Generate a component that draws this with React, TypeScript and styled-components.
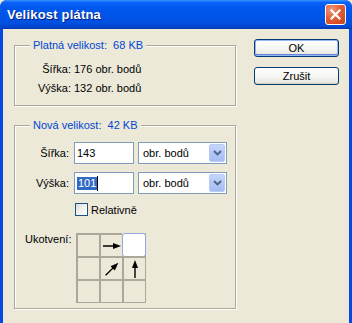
import React from "react";
import styled, { createGlobalStyle } from "styled-components";

const Global = createGlobalStyle`
  html, body { margin: 0; padding: 0; background: #ece9d8; overflow: hidden; }
  * { box-sizing: border-box; }
`;

const Window = styled.div`
  width: 352px;
  height: 323px;
  display: flex;
  flex-direction: column;
  font-family: "Liberation Sans", Arial, sans-serif;
  font-size: 11px;
  color: #000;
  background: #0a46e0;
  border-radius: 7px 7px 0 0;
  overflow: hidden;
`;

const TitleBar = styled.div`
  height: 29px;
  flex: none;
  display: flex;
  align-items: center;
  justify-content: space-between;
  padding: 0 6px 1px 7px;
  background: linear-gradient(
    180deg,
    #3d93ff 0%,
    #0a64f8 8%,
    #0058ee 25%,
    #0054e8 55%,
    #0050e0 80%,
    #0044cc 94%,
    #003aae 100%
  );
`;

const Title = styled.span`
  font-family: "Liberation Sans", Arial, sans-serif;
  font-weight: bold;
  font-size: 13px;
  color: #fff;
  text-shadow: 1px 1px 0 #0a1e80;
  letter-spacing: 0.2px;
`;

const CloseButton = styled.div`
  width: 21px;
  height: 21px;
  border: 1px solid #fff;
  border-radius: 3px;
  background: radial-gradient(circle at 30% 25%, #f09a7e 0%, #e35d35 45%, #c8401b 100%);
  display: flex;
  align-items: center;
  justify-content: center;
  margin-top: 1px;
`;

const Body = styled.div`
  flex: 1;
  margin: 0 3px;
  background: #ece9d8;
  display: flex;
  align-items: flex-start;
  padding: 10px 0 0 11px;
`;

const LeftCol = styled.div`
  width: 223px;
  display: flex;
  flex-direction: column;
  gap: 13px;
`;

const Group = styled.fieldset<{ $h: number }>`
  margin: 0;
  padding: 0;
  min-width: 0;
  width: 222px;
  height: ${(p) => p.$h}px;
  border: 1px solid #aca899;
  box-shadow: inset 1px 1px 0 #fff, 1px 1px 0 #fff;
  position: relative;
`;

const Legend = styled.legend`
  margin-left: 15px;
  padding: 0 3px;
  color: #0046d5;
  white-space: pre;
  background: #ece9d8;
  line-height: 13px;
`;

const InfoGrid = styled.div`
  display: grid;
  grid-template-columns: 41px auto;
  column-gap: 3px;
  row-gap: 6px;
  padding: 11px 0 0 15px;
  line-height: 13px;
`;

const RightLabel = styled.span`
  text-align: right;
`;

const FormGrid = styled.div`
  display: grid;
  grid-template-columns: 55px 60px 89px;
  column-gap: 4px;
  row-gap: 8px;
  padding: 10px 0 0 0;
  align-items: center;
`;

const FieldLabel = styled.span`
  text-align: right;
  padding-right: 1px;
`;

const TextInput = styled.div`
  height: 22px;
  border: 1px solid #7f9db9;
  background: #fff;
  display: flex;
  align-items: center;
  padding-left: 2px;
`;

const Selected = styled.span`
  background: #316ac5;
  color: #fff;
  padding: 0 1px;
  line-height: 13px;
`;

const Caret = styled.span`
  width: 1px;
  height: 15px;
  background: #000;
`;

const Select = styled.div`
  height: 22px;
  border: 1px solid #7f9db9;
  background: #fff;
  display: flex;
  align-items: center;
  justify-content: space-between;
  padding: 0 1px 0 4px;
`;

const DropButton = styled.div`
  width: 16px;
  height: 18px;
  border-radius: 2px;
  background: linear-gradient(180deg, #c6d6fc 0%, #b4c8f6 50%, #a6bcf2 100%);
  border: 1px solid #b9cbf5;
  display: flex;
  align-items: center;
  justify-content: center;
`;

const CheckRow = styled.div`
  grid-column: 2 / 4;
  display: flex;
  align-items: center;
  gap: 3px;
  margin-top: 1px;
  padding-left: 1px;
`;

const CheckBox = styled.span`
  width: 13px;
  height: 13px;
  border: 1px solid #1c5180;
  background: linear-gradient(135deg, #dcdcd7 0%, #f5f5f2 60%, #fff 100%);
`;

const AnchorRow = styled.div`
  display: flex;
  align-items: flex-start;
  padding: 17px 0 0 10px;
`;

const AnchorLabel = styled.span`
  width: 51px;
  line-height: 13px;
`;

const AnchorGrid = styled.div`
  display: grid;
  grid-template-columns: repeat(3, 23px);
  grid-template-rows: repeat(3, 23px);
  border-right: 1px solid #aca899;
  border-bottom: 1px solid #aca899;
  width: 70px;
`;

const Cell = styled.div<{ $active?: boolean }>`
  border-left: 2px solid #aca899;
  border-top: 2px solid #aca899;
  display: flex;
  align-items: center;
  justify-content: center;
  position: relative;
  ${(p) =>
    p.$active &&
    `
    background: #fff;
    border: 1px solid #8faad8;
    border-radius: 3px;
    margin: 0 -1px -1px 0;
  `}
`;

const RightCol = styled.div`
  display: flex;
  flex-direction: column;
  gap: 10px;
  margin: 0 0 0 17px;
`;

const Button = styled.div<{ $default?: boolean }>`
  width: 85px;
  height: 18px;
  border: 1px solid #003c74;
  border-radius: 3px;
  background: linear-gradient(180deg, #ffffff 0%, #f4f4f0 60%, #e3e2da 100%);
  display: flex;
  align-items: center;
  justify-content: center;
  box-shadow: ${(p) =>
    p.$default ? "inset 0 0 0 1px #9ab8f0, inset 0 -1px 0 1px #5f87d9" : "inset 0 -1px 0 #d6d0c5"};
`;

const Arrow = ({ rot }: { rot: number }) => (
  <svg width="20" height="20" viewBox="0 0 20 20" style={{ transform: `rotate(${rot}deg)` }}>
    <line x1="1" y1="10" x2="13" y2="10" stroke="#000" strokeWidth="1.4" />
    <polygon points="11,7 19,10 11,13" fill="#000" />
  </svg>
);

const Chevron = () => (
  <svg width="9" height="6" viewBox="0 0 9 6">
    <path d="M1 1 L4.5 4.5 L8 1" fill="none" stroke="#4d6185" strokeWidth="1.8" />
  </svg>
);

export default function App() {
  return (
    <>
      <Global />
      <Window>
        <TitleBar>
          <Title>Velikost plátna</Title>
          <CloseButton>
            <svg width="11" height="11" viewBox="0 0 11 11">
              <path d="M1.5 1.5 L9.5 9.5 M9.5 1.5 L1.5 9.5" stroke="#fff" strokeWidth="2.2" strokeLinecap="square" />
            </svg>
          </CloseButton>
        </TitleBar>
        <Body>
          <LeftCol>
            <Group $h={67}>
              <Legend>{"Platná velikost:  68 KB"}</Legend>
              <InfoGrid>
                <RightLabel>Šířka:</RightLabel>
                <span>176 obr. bodů</span>
                <RightLabel>Výška:</RightLabel>
                <span>132 obr. bodů</span>
              </InfoGrid>
            </Group>
            <Group $h={190}>
              <Legend>{"Nová velikost:  42 KB"}</Legend>
              <FormGrid>
                <FieldLabel>Šířka:</FieldLabel>
                <TextInput>143</TextInput>
                <Select>
                  <span>obr. bodů</span>
                  <DropButton>
                    <Chevron />
                  </DropButton>
                </Select>
                <FieldLabel>Výška:</FieldLabel>
                <TextInput>
                  <Selected>101</Selected>
                  <Caret />
                </TextInput>
                <Select>
                  <span>obr. bodů</span>
                  <DropButton>
                    <Chevron />
                  </DropButton>
                </Select>
                <span />
                <CheckRow>
                  <CheckBox />
                  <span>Relativně</span>
                </CheckRow>
              </FormGrid>
              <AnchorRow>
                <AnchorLabel>Ukotvení:</AnchorLabel>
                <AnchorGrid>
                  <Cell />
                  <Cell>
                    <Arrow rot={0} />
                  </Cell>
                  <Cell $active />
                  <Cell />
                  <Cell>
                    <Arrow rot={-45} />
                  </Cell>
                  <Cell>
                    <Arrow rot={-90} />
                  </Cell>
                  <Cell />
                  <Cell />
                  <Cell />
                </AnchorGrid>
              </AnchorRow>
            </Group>
          </LeftCol>
          <RightCol>
            <Button $default>OK</Button>
            <Button>Zrušit</Button>
          </RightCol>
        </Body>
      </Window>
    </>
  );
}
